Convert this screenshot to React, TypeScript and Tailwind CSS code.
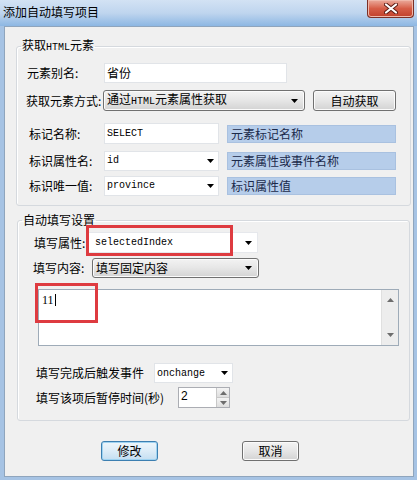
import React from 'react';

const Arrow = () => (
  <svg width="7" height="4" viewBox="0 0 7 4" className="shrink-0">
    <path d="M0 0H7L3.5 4Z" fill="#000" />
  </svg>
);

const SmallArrow = ({ up }: { up?: boolean }) => (
  <svg width="7" height="4" viewBox="0 0 7 4">
    <path d={up ? 'M0 4H7L3.5 0Z' : 'M0 0H7L3.5 4Z'} fill="#6d6d6d" />
  </svg>
);

const btn =
  'border border-[#707070] rounded-[3px] bg-gradient-to-b from-[#f3f3f3] via-[#e6e6e6] to-[#d3d3d3] shadow-[inset_0_0_0_1px_#fbfbfb]';

const mono = "font-['Liberation_Mono',monospace] text-[10px]";

const Hint = ({ text }: { text: string }) => (
  <div className="ml-[8px] w-[169px] h-[18px] bg-[#b6cdea] border border-[#a9c1e0] pl-[3px] flex items-center leading-[14px] text-[#1b2a4a]">
    {text}
  </div>
);

const Combo = ({ value, w }: { value: string; w: string }) => (
  <div className={`${w} h-[20px] bg-white border border-[#e1e4e8] flex items-center justify-between pl-[2px] pr-[4px]`}>
    <span className={mono}>{value}</span>
    <Arrow />
  </div>
);

export default function App() {
  return (
    <div className="w-[417px] h-[480px] flex flex-col bg-[#a6c3e4] font-['Noto_Sans_CJK_SC','Noto_Sans',sans-serif] text-[12px] text-black overflow-hidden">
      {/* title bar */}
      <div className="h-[26px] flex items-start justify-between bg-gradient-to-b from-[#d2e2f4] via-[#bfd5ee] to-[#8db7e3]">
        <span className="pl-[3px] pt-[5px] leading-[14px]">添加自动填写项目</span>
        <div className="mr-[3px] w-[47px] h-[18px] rounded-b-[4px] border border-t-0 border-[#7b3026] bg-gradient-to-b from-[#eaaa9c] via-[#d65d47] to-[#c0402a] flex items-center justify-center shadow-[inset_0_0_0_1px_#f0b8aa]">
          <svg width="14" height="11" viewBox="0 0 14 11">
            <path d="M2 1.5L12 9.5M12 1.5L2 9.5" stroke="#5a1a12" strokeWidth="4" strokeLinecap="round" />
            <path d="M2 1.5L12 9.5M12 1.5L2 9.5" stroke="#fff" strokeWidth="2.2" strokeLinecap="round" />
          </svg>
        </div>
      </div>

      {/* frame */}
      <div className="flex-1 flex pl-[4px] pr-[3px] pb-[3px]">
        <div className="flex-1 bg-[#f0f0f0] border border-[#8fa5bd] flex flex-col">
          {/* group 1 */}
          <fieldset className="ml-[11px] mt-[11px] w-[395px] border border-[#d5d9de] rounded-[3px] pb-[9px] shadow-[inset_1px_1px_0_#fff]">
            <legend className="ml-[4px] px-[1px] leading-[14px]">
              获取<span className="font-['Liberation_Mono',monospace] text-[10px]">HTML</span>元素
            </legend>

            <div className="mt-[7px] h-[21px] flex items-center">
              <span className="w-[87px] pl-[10px] leading-[14px] shrink-0">元素别名:</span>
              <div className="w-[183px] h-[20px] bg-white border border-[#e1e4e8] pl-[2px] flex items-center leading-[14px]">省份</div>
            </div>

            <div className="mt-[7px] h-[21px] flex items-center">
              <span className="w-[86px] pl-[9px] leading-[14px] shrink-0">获取元素方式:</span>
              <div className={`w-[202px] h-[21px] ${btn} flex items-center justify-between pl-[3px] pr-[6px]`}>
                <span className="leading-[14px]">
                  通过<span className={mono}>HTML</span>元素属性获取
                </span>
                <Arrow />
              </div>
              <div className={`ml-[8px] w-[83px] h-[21px] ${btn} flex items-center justify-center leading-[14px]`}>自动获取</div>
            </div>

            <div className="mt-[12px] h-[21px] flex items-center">
              <span className="w-[87px] pl-[12px] leading-[14px] shrink-0">标记名称:</span>
              <div className="w-[115px] h-[21px] bg-white border border-[#e1e4e8] pl-[2px] flex items-center">
                <span className={mono}>SELECT</span>
              </div>
              <Hint text="元素标记名称" />
            </div>

            <div className="mt-[6px] h-[21px] flex items-center">
              <span className="w-[87px] pl-[12px] leading-[14px] shrink-0">标识属性名:</span>
              <Combo value="id" w="w-[115px]" />
              <Hint text="元素属性或事件名称" />
            </div>

            <div className="mt-[4px] h-[21px] flex items-center">
              <span className="w-[87px] pl-[12px] leading-[14px] shrink-0">标识唯一值:</span>
              <Combo value="province" w="w-[115px]" />
              <Hint text="标识属性值" />
            </div>
          </fieldset>

          {/* group 2 */}
          <fieldset className="ml-[12px] mt-[7px] w-[393px] border border-[#d5d9de] rounded-[3px] pb-[12px] shadow-[inset_1px_1px_0_#fff]">
            <legend className="ml-[4px] px-[1px] leading-[14px]">自动填写设置</legend>

            <div className="mt-[5px] h-[21px] flex items-center">
              <span className="w-[70px] pl-[16px] leading-[14px] shrink-0">填写属性:</span>
              <div className="relative">
                <div className="w-[170px] h-[21px] bg-white border border-[#e6e8ec] flex items-center justify-between pl-[6px] pr-[5px]">
                  <span className={mono}>selectedIndex</span>
                  <Arrow />
                </div>
                <div className="absolute left-[-2px] top-[-7px] w-[147px] h-[31px] border-[3px] border-[#de3b40]" />
              </div>
            </div>

            <div className="mt-[5px] h-[20px] flex items-center">
              <span className="w-[74px] pl-[15px] leading-[14px] shrink-0">填写内容:</span>
              <div className={`w-[167px] h-[20px] ${btn} flex items-center justify-between pl-[3px] pr-[6px]`}>
                <span className="leading-[14px]">填写固定内容</span>
                <Arrow />
              </div>
            </div>

            <div className="relative mt-[11px] ml-[20px] w-[361px] h-[57px] border border-[#9eabb8] bg-white flex">
              <div className="flex-1 pl-[3px] pt-[3px] flex items-start">
                <span className="font-['Liberation_Serif',serif] text-[12px] leading-[14px]">11</span>
                <span className="mt-[1px] ml-[1px] w-[1px] h-[12px] bg-black" />
              </div>
              <div className="w-[17px] bg-[#ededed] border-l border-[#e0e0e0] flex flex-col items-center justify-between py-[8px]">
                <SmallArrow up />
                <SmallArrow />
              </div>
              <div className="absolute left-[-4px] top-[-7px] w-[63px] h-[40px] border-[3px] border-[#de3b40]" />
            </div>

            <div className="mt-[17px] h-[20px] flex items-center">
              <span className="w-[136px] pl-[18px] leading-[14px] shrink-0">填写完成后触发事件</span>
              <Combo value="onchange" w="w-[79px]" />
            </div>

            <div className="mt-[4px] h-[21px] flex items-center">
              <span className="w-[160px] pl-[18px] leading-[14px] shrink-0">填写该项后暂停时间(秒)</span>
              <div className="w-[52px] h-[21px] bg-white border border-[#abadb3] flex">
                <div className="flex-1 pl-[2px] pt-[1px] leading-[14px] font-['Liberation_Sans',sans-serif] text-[12px]">2</div>
                <div className="w-[13px] flex flex-col border-l border-[#c8c8c8]">
                  <div className="flex-1 bg-gradient-to-b from-[#f4f4f4] to-[#dedede] border-b border-[#c8c8c8] flex items-center justify-center">
                    <SmallArrow up />
                  </div>
                  <div className="flex-1 bg-gradient-to-b from-[#f4f4f4] to-[#dedede] flex items-center justify-center">
                    <SmallArrow />
                  </div>
                </div>
              </div>
            </div>
          </fieldset>

          {/* buttons */}
          <div className="mt-[20px] ml-[96px] flex gap-[84px]">
            <div className="w-[57px] h-[20px] rounded-[3px] border border-[#3c7fb1] bg-gradient-to-b from-[#eef6fb] via-[#dcecf7] to-[#c4def1] shadow-[inset_0_0_0_1px_#9fd3f1] flex items-center justify-center leading-[14px]">修改</div>
            <div className={`w-[57px] h-[20px] ${btn} flex items-center justify-center leading-[14px]`}>取消</div>
          </div>
        </div>
      </div>
    </div>
  );
}
